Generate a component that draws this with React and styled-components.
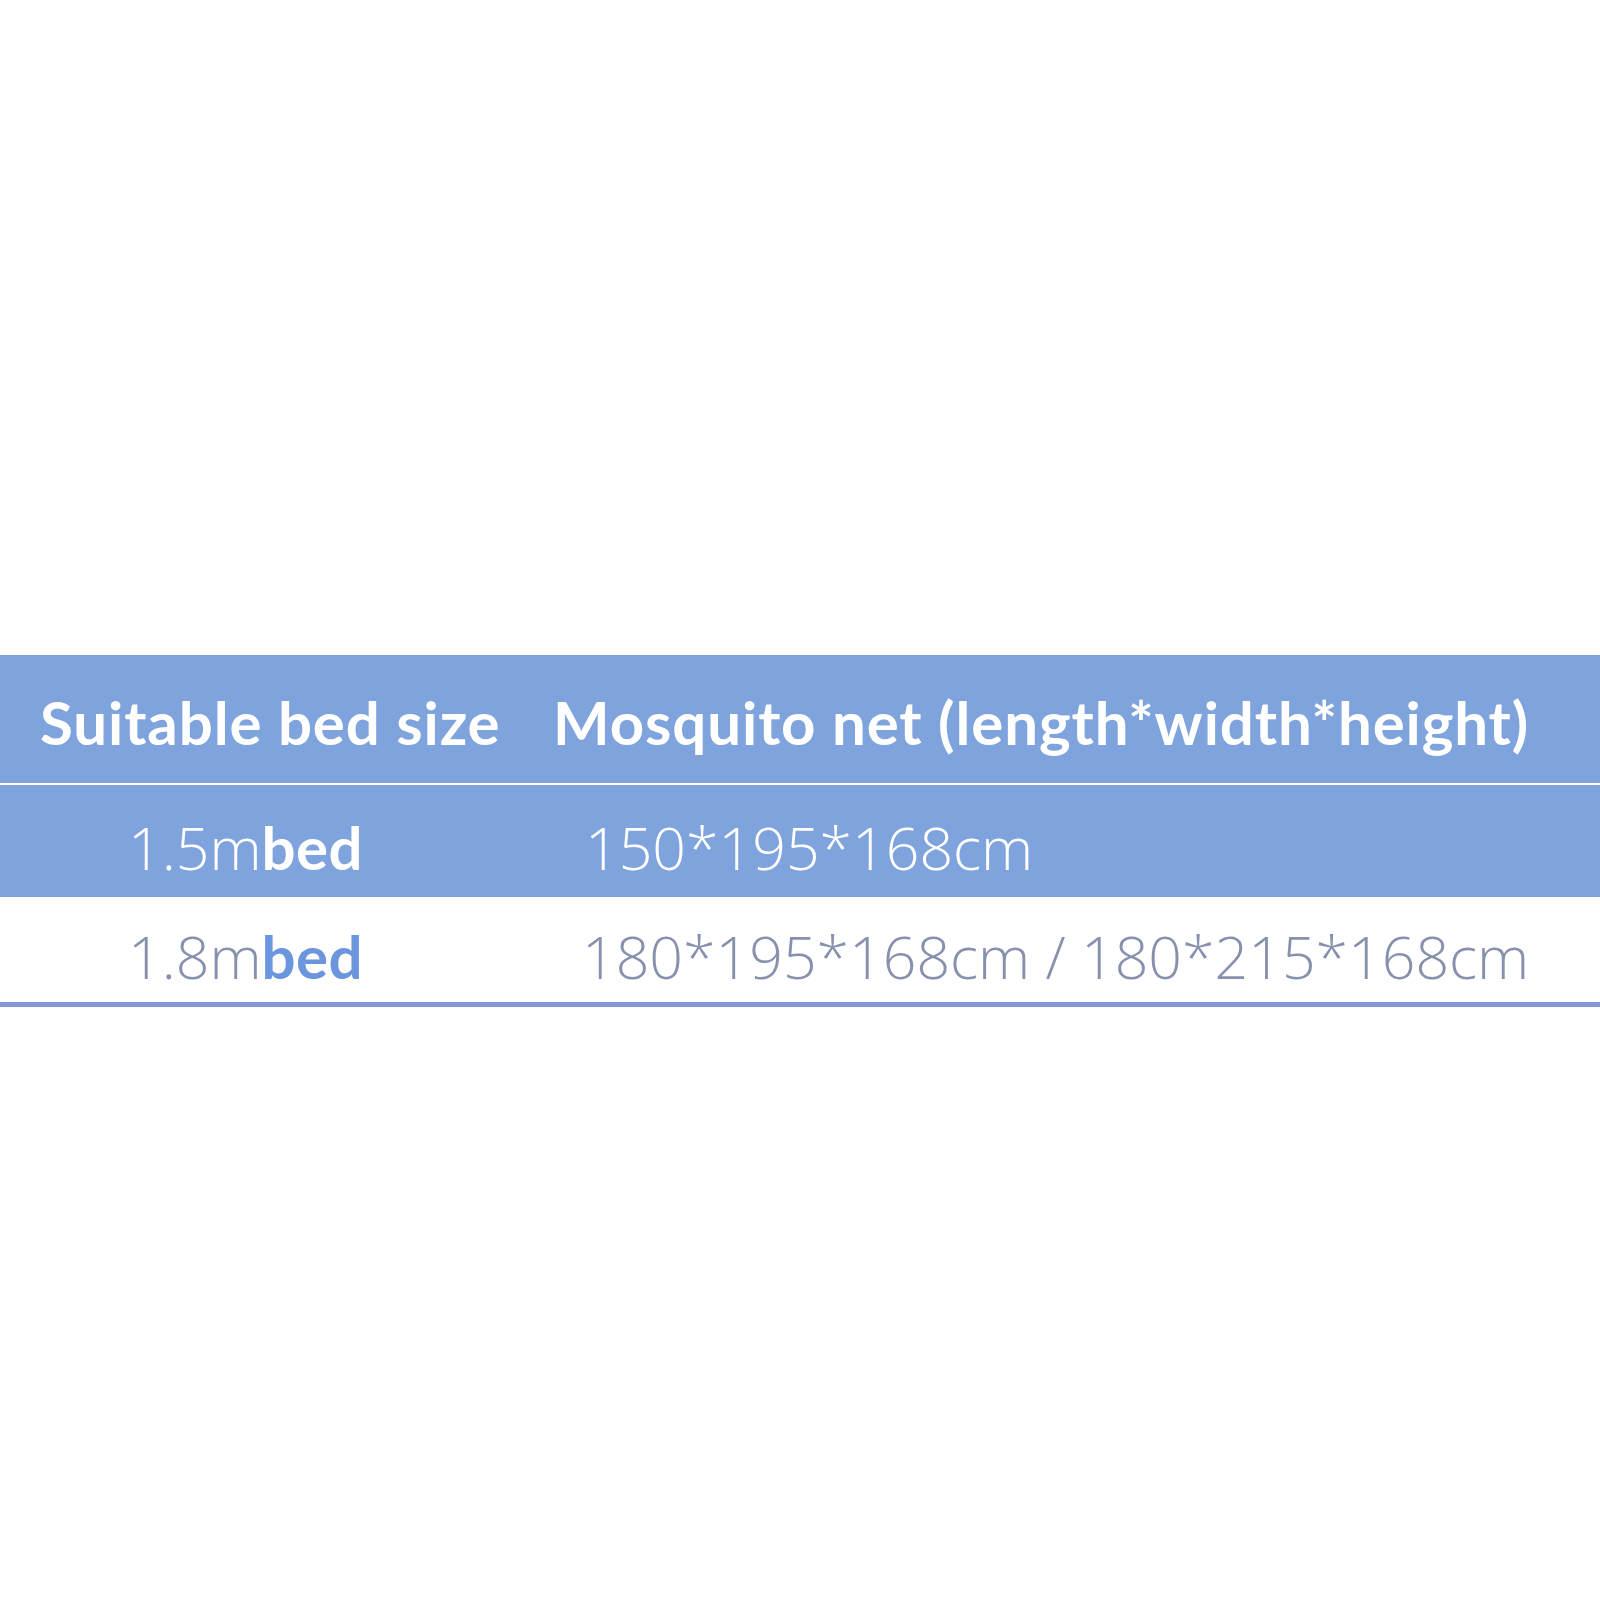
import React from "react";
import styled, { createGlobalStyle } from "styled-components";

const Global = createGlobalStyle`
  html, body { margin: 0; padding: 0; background: #ffffff; }
  body { font-family: "Open Sans", "Liberation Sans", sans-serif; }
`;

const Page = styled.div`
  width: 1600px;
  height: 1600px;
  padding-top: 655px;
  box-sizing: border-box;
  background: #ffffff;
`;

const Table = styled.div`
  display: flex;
  flex-direction: column;
  border-bottom: 5px solid #8398d6;
`;

const Row = styled.div`
  display: grid;
  grid-template-columns: 520px 1fr;
  align-items: center;
  height: ${(p) => p.$h}px;
  background: ${(p) => (p.$blue ? "#7fa3dd" : "#ffffff")};
  border-bottom: ${(p) => (p.$divider ? "2px solid #ffffff" : "none")};
  box-sizing: content-box;
`;

const HeadCell = styled.div`
  padding-left: ${(p) => p.$pl}px;
  padding-top: 6px;
  font-family: "Lato", "Open Sans", sans-serif;
  font-weight: 700;
  font-size: 60px;
  letter-spacing: 0.9px;
  color: #ffffff;
  white-space: nowrap;
`;

const Cell = styled.div`
  padding-left: ${(p) => p.$pl}px;
  padding-top: 12px;
  font-family: "Open Sans", "Liberation Sans", sans-serif;
  font-weight: 300;
  font-size: 59px;
  color: ${(p) => (p.$light ? "#ffffff" : "#8791ae")};
  white-space: nowrap;
`;

const Bold = styled.span`
  font-family: "Lato", "Open Sans", sans-serif;
  font-weight: 700;
  font-size: 60px;
  letter-spacing: 0.5px;
  color: ${(p) => (p.$light ? "#ffffff" : "#6b95dc")};
`;

export default function App() {
  return (
    <>
      <Global />
      <Page>
        <Table>
          <Row $blue $divider $h={128}>
            <HeadCell $pl={40}>Suitable bed size</HeadCell>
            <HeadCell $pl={33}>Mosquito net (length*width*height)</HeadCell>
          </Row>
          <Row $blue $h={112}>
            <Cell $light $pl={128}>
              1.5m<Bold $light>bed</Bold>
            </Cell>
            <Cell $light $pl={65}>150*195*168cm</Cell>
          </Row>
          <Row $h={105}>
            <Cell $pl={128}>
              1.8m<Bold>bed</Bold>
            </Cell>
            <Cell $pl={62}>180*195*168cm / 180*215*168cm</Cell>
          </Row>
        </Table>
      </Page>
    </>
  );
}
